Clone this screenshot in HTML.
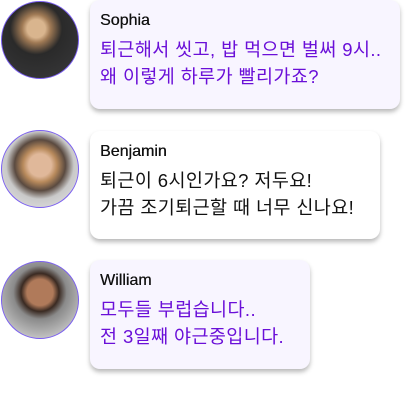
<!DOCTYPE html>
<html><head><style>
body{margin:0;width:420px;height:400px;background:#fff;font-family:"Liberation Sans","Noto Sans CJK KR",sans-serif;position:relative;overflow:hidden}
.av{position:absolute;left:1px;width:76px;height:76px;border-radius:50%;border:1px solid #7a5ef0;overflow:hidden}
.b{position:absolute;left:90px;border-radius:10px;box-shadow:0 3px 5px rgba(0,0,0,.28);box-sizing:border-box;padding:11px 0 0 10px}
.n{font-size:16px;color:#111;height:25px;line-height:20px;text-shadow:0.3px 0 0 #111}
.t{font-size:18.5px;line-height:27px;white-space:nowrap;letter-spacing:0.4px}
.p{background:#f8f5ff}.p .t{color:#6a0fd8}
</style></head><body>
<div class="av" style="top:1px;background:radial-gradient(circle at 45% 35%,#d9b58e 0 14%,#a07a55 22%,#2a2a2a 40%,#3a3a3c 100%)"></div>
<div class="b p" style="top:0;width:310px;height:109px"><div class="n">Sophia</div><div class="t">퇴근해서 씻고, 밥 먹으면 벌써 9시..<br>왜 이렇게 하루가 빨리가죠?</div></div>
<div class="av" style="top:130px;background:radial-gradient(circle at 50% 45%,#e0b89a 0 20%,#b88a5c 30%,#5a4a40 45%,#c9c9c9 60%,#eaeaea 100%)"></div>
<div class="b" style="top:131px;width:290px;height:108px;background:#fff"><div class="n">Benjamin</div><div class="t" style="color:#111">퇴근이 6시인가요? 저두요!<br>가끔 조기퇴근할 때 너무 신나요!</div></div>
<div class="av" style="top:261px;background:radial-gradient(circle at 50% 40%,#b07a5a 0 22%,#3a2a22 32%,#8a8a8a 45%,#b5b5b5 70%,#efefef 100%)"></div>
<div class="b p" style="top:260px;width:220px;height:109px"><div class="n">William</div><div class="t">모두들 부럽습니다..<br>전 3일째 야근중입니다.</div></div>
</body></html>
